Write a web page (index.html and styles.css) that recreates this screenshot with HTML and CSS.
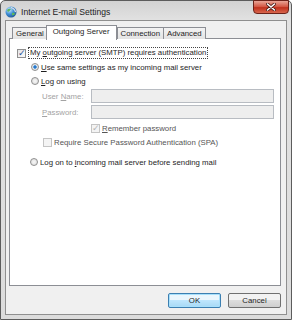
FILE: index.html
```html
<!DOCTYPE html>
<html lang="en">
<head>
    <meta charset="UTF-8">
    <title>Internet E-mail Settings</title>
    <link rel="stylesheet" href="styles.css">
</head>
<body>
    <div class="window">
        <div class="titlebar">
            <svg class="app-icon" width="12" height="12" viewBox="0 0 12 12">
                <defs>
                    <radialGradient id="globe" cx="0.35" cy="0.3" r="0.8">
                        <stop offset="0" stop-color="#cfe9ff"/>
                        <stop offset="0.5" stop-color="#3f8fd6"/>
                        <stop offset="1" stop-color="#1d4f8c"/>
                    </radialGradient>
                </defs>
                <circle cx="6" cy="6" r="5.5" fill="url(#globe)"/>
                <path d="M2 4 Q4 2 6 3 Q5 5 3 6 Z M7 7 Q9 6 10 8 Q8 10 7 9 Z" fill="#5cb85c"/>
                <path d="M6 1.5 A6 6 0 0 1 10.5 6" fill="none" stroke="#e8e8e8" stroke-width="1.2"/>
            </svg>
            <span class="title">Internet E-mail Settings</span>
            <div class="close">
                <svg width="10" height="8" viewBox="0 0 10 8">
                    <path d="M1.5 1 L8.5 7 M8.5 1 L1.5 7" stroke="#4a1a14" stroke-width="3" stroke-linecap="round"/>
                    <path d="M1.5 1 L8.5 7 M8.5 1 L1.5 7" stroke="#ffffff" stroke-width="1.6" stroke-linecap="round"/>
                </svg>
            </div>
        </div>

        <div class="client">
            <div class="tabs">
                <div class="tab">General</div>
                <div class="tab active">Outgoing Server</div>
                <div class="tab">Connection</div>
                <div class="tab">Advanced</div>
            </div>

            <div class="panel">
                <div class="row auth-row">
                    <span class="checkbox">&#10003;</span>
                    <span class="focus">My <u>o</u>utgoing server (SMTP) requires authentication</span>
                </div>
                <div class="row option">
                    <span class="radio on"></span>
                    <span><u>U</u>se same settings as my incoming mail server</span>
                </div>
                <div class="row option">
                    <span class="radio"></span>
                    <span><u>L</u>og on using</span>
                </div>
                <div class="field">
                    <label>User <u>N</u>ame:</label>
                    <div class="input"></div>
                </div>
                <div class="field">
                    <label><u>P</u>assword:</label>
                    <div class="input"></div>
                </div>
                <div class="row remember">
                    <span class="checkbox disabled">&#10003;</span>
                    <span class="dim"><u>R</u>emember password</span>
                </div>
                <div class="row spa">
                    <span class="checkbox disabled"></span>
                    <span class="dim">Require Secure Password Authentication (SPA)</span>
                </div>
                <div class="row option last">
                    <span class="radio"></span>
                    <span>Log on to <u>i</u>ncoming mail server before sending mail</span>
                </div>
            </div>

            <div class="buttons">
                <button class="btn default">OK</button>
                <button class="btn">Cancel</button>
            </div>
        </div>
    </div>
</body>
</html>
```

FILE: styles.css
```css
body {
    margin: 0;
    font-family: "Segoe UI", "Liberation Sans", Arial, sans-serif;
    font-size: 7.8px;
    color: #1e1e1e;
}
.window {
    width: 292px;
    height: 320px;
    box-sizing: border-box;
    border: 1px solid #5c5c5c;
    border-radius: 5px 5px 0 0;
    background: linear-gradient(#d2d2d2, #e2e2e2 20px, #dcdcdc);
    display: flex;
    flex-direction: column;
}
.titlebar {
    height: 19px;
    display: flex;
    align-items: center;
    position: relative;
}
.app-icon {
    margin-left: 4px;
    margin-top: 2px;
}
.title {
    margin-left: 4px;
    margin-top: 2px;
    font-size: 8.6px;
    color: #222;
}
.close {
    position: absolute;
    right: 2px;
    top: -1px;
    width: 36px;
    height: 14px;
    box-sizing: border-box;
    border: 1px solid #6b2219;
    border-radius: 0 0 4px 4px;
    background: linear-gradient(#e9a596, #d2533f 50%, #c0301c 55%, #d8664d);
    display: flex;
    align-items: center;
    justify-content: center;
}
.client {
    flex: 1;
    margin: 0 4px 4px 4px;
    border: 1px solid #8f8f8f;
    background: #f0f0f0;
    padding: 4px 5px 6px 3px;
    display: flex;
    flex-direction: column;
}
.tabs {
    display: flex;
    height: 14px;
    margin-left: 3px;
    position: relative;
    z-index: 1;
}
.tab {
    margin-top: 2px;
    height: 12px;
    box-sizing: border-box;
    padding: 0 3px;
    border: 1px solid #8c8e94;
    border-bottom: none;
    margin-right: -1px;
    background: linear-gradient(#f3f3f3, #e3e3e3);
    line-height: 11px;
}
.tab.active {
    margin-top: 0;
    height: 15px;
    padding: 0 6px;
    background: #fff;
    line-height: 12px;
    margin-left: -1px;
    margin-right: 0;
}
.panel {
    flex: 1;
    margin-top: -1px;
    border: 1px solid #8c8e94;
    background: #fff;
    padding-top: 7px;
}
.row {
    display: flex;
    align-items: center;
    height: 14px;
}
.auth-row {
    padding-left: 7px;
}
.focus {
    margin-left: 1px;
    outline: 1px dotted #444;
    padding: 0 1px;
    line-height: 10px;
}
.option {
    padding-left: 21px;
}
.option.last {
    margin-top: 6px;
    padding-left: 20px;
}
.checkbox {
    width: 9px;
    height: 9px;
    box-sizing: border-box;
    border: 1px solid #8f8f8f;
    background: linear-gradient(135deg, #e4e4e4, #fbfbfb);
    color: #2a4f9a;
    font-size: 9px;
    line-height: 7px;
    text-align: center;
    margin-right: 2px;
    font-family: "DejaVu Sans", sans-serif;
}
.checkbox.disabled {
    border-color: #c4c4c4;
    background: #f4f4f4;
    color: #b5b5b5;
}
.radio {
    width: 8px;
    height: 8px;
    box-sizing: border-box;
    border: 1px solid #8f8f8f;
    border-radius: 50%;
    background: radial-gradient(#f8f8f8, #d8d8d8);
    margin-right: 2px;
}
.radio.on {
    background: radial-gradient(circle, #1d5fb0 0, #3a8fe0 35%, #e8e8e8 45%);
}
.field {
    display: flex;
    align-items: center;
    margin-top: 1px;
    height: 14px;
    padding-left: 32px;
}
.field + .field {
    margin-top: 2px;
}
.field label {
    width: 49px;
    color: #a3a3a3;
}
.input {
    width: 183px;
    height: 14px;
    box-sizing: border-box;
    border: 1px solid #b8bcc2;
    background: #eeeeee;
}
.remember {
    margin-top: 2px;
    padding-left: 81px;
}
.spa {
    padding-left: 33px;
}
.dim {
    color: #555;
}
.buttons {
    display: flex;
    justify-content: flex-end;
    gap: 7px;
    margin-top: 7px;
}
.btn {
    width: 53px;
    height: 15px;
    padding: 0;
    font-family: inherit;
    font-size: 7.8px;
    color: #1e1e1e;
    border: 1px solid #707070;
    border-radius: 2px;
    background: linear-gradient(#f2f2f2 50%, #dddddd 50%, #cfcfcf);
}
.btn.default {
    border-color: #3c7fb1;
    background: linear-gradient(#eaf6fd 50%, #bee6fd 50%, #a7d9f5);
    box-shadow: inset 0 0 0 1px #a8e0fb;
}
```
